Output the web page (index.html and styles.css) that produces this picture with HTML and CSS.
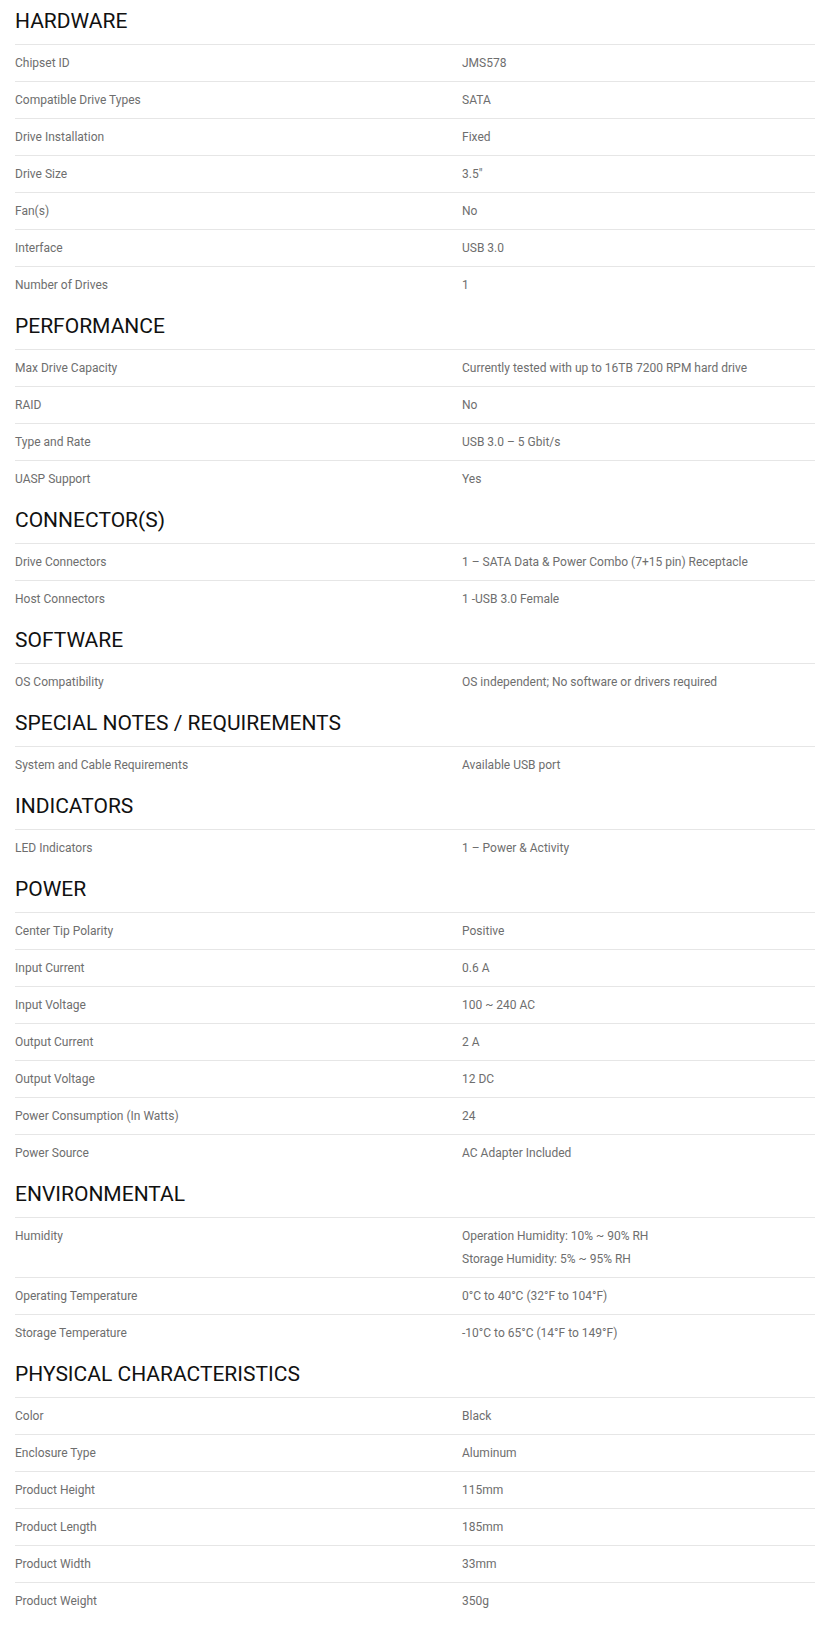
FILE: index.html
```html
<!DOCTYPE html>
<html>
<head>
  <title>Specifications</title>
  <link rel="stylesheet" href="styles.css">
</head>
<body>
  <div class="specs">
    <div class="section">
      <h3 class="section-title">HARDWARE</h3>
      <div class="row"><div class="label">Chipset ID</div><div class="value">JMS578</div></div>
      <div class="row"><div class="label">Compatible Drive Types</div><div class="value">SATA</div></div>
      <div class="row"><div class="label">Drive Installation</div><div class="value">Fixed</div></div>
      <div class="row"><div class="label">Drive Size</div><div class="value">3.5"</div></div>
      <div class="row"><div class="label">Fan(s)</div><div class="value">No</div></div>
      <div class="row"><div class="label">Interface</div><div class="value">USB 3.0</div></div>
      <div class="row"><div class="label">Number of Drives</div><div class="value">1</div></div>
    </div>

    <div class="section">
      <h3 class="section-title">PERFORMANCE</h3>
      <div class="row"><div class="label">Max Drive Capacity</div><div class="value">Currently tested with up to 16TB 7200 RPM hard drive</div></div>
      <div class="row"><div class="label">RAID</div><div class="value">No</div></div>
      <div class="row"><div class="label">Type and Rate</div><div class="value">USB 3.0 – 5 Gbit/s</div></div>
      <div class="row"><div class="label">UASP Support</div><div class="value">Yes</div></div>
    </div>

    <div class="section">
      <h3 class="section-title">CONNECTOR(S)</h3>
      <div class="row"><div class="label">Drive Connectors</div><div class="value">1 – SATA Data &amp; Power Combo (7+15 pin) Receptacle</div></div>
      <div class="row"><div class="label">Host Connectors</div><div class="value">1 -USB 3.0 Female</div></div>
    </div>

    <div class="section">
      <h3 class="section-title">SOFTWARE</h3>
      <div class="row"><div class="label">OS Compatibility</div><div class="value">OS independent; No software or drivers required</div></div>
    </div>

    <div class="section">
      <h3 class="section-title">SPECIAL NOTES / REQUIREMENTS</h3>
      <div class="row"><div class="label">System and Cable Requirements</div><div class="value">Available USB port</div></div>
    </div>

    <div class="section">
      <h3 class="section-title">INDICATORS</h3>
      <div class="row"><div class="label">LED Indicators</div><div class="value">1 – Power &amp; Activity</div></div>
    </div>

    <div class="section">
      <h3 class="section-title">POWER</h3>
      <div class="row"><div class="label">Center Tip Polarity</div><div class="value">Positive</div></div>
      <div class="row"><div class="label">Input Current</div><div class="value">0.6 A</div></div>
      <div class="row"><div class="label">Input Voltage</div><div class="value">100 ~ 240 AC</div></div>
      <div class="row"><div class="label">Output Current</div><div class="value">2 A</div></div>
      <div class="row"><div class="label">Output Voltage</div><div class="value">12 DC</div></div>
      <div class="row"><div class="label">Power Consumption (In Watts)</div><div class="value">24</div></div>
      <div class="row"><div class="label">Power Source</div><div class="value">AC Adapter Included</div></div>
    </div>

    <div class="section">
      <h3 class="section-title">ENVIRONMENTAL</h3>
      <div class="row">
        <div class="label">Humidity</div>
        <div class="value">Operation Humidity: 10% ~ 90% RH<br>Storage Humidity: 5% ~ 95% RH</div>
      </div>
      <div class="row"><div class="label">Operating Temperature</div><div class="value">0°C to 40°C (32°F to 104°F)</div></div>
      <div class="row"><div class="label">Storage Temperature</div><div class="value">-10°C to 65°C (14°F to 149°F)</div></div>
    </div>

    <div class="section">
      <h3 class="section-title">PHYSICAL CHARACTERISTICS</h3>
      <div class="row"><div class="label">Color</div><div class="value">Black</div></div>
      <div class="row"><div class="label">Enclosure Type</div><div class="value">Aluminum</div></div>
      <div class="row"><div class="label">Product Height</div><div class="value">115mm</div></div>
      <div class="row"><div class="label">Product Length</div><div class="value">185mm</div></div>
      <div class="row"><div class="label">Product Width</div><div class="value">33mm</div></div>
      <div class="row"><div class="label">Product Weight</div><div class="value">350g</div></div>
    </div>
  </div>
</body>
</html>
```

FILE: styles.css
```css
body {
  font-family: Roboto, "Liberation Sans", sans-serif;
  background-color: #fff;
  color: #111;
  margin: 0;
}

.specs {
  margin-left: 15px;
}

.section-title {
  margin: 0;
  padding: 11px 0 11px;
  font-size: 21px;
  font-weight: 400;
  line-height: 24px;
  color: #111;
  border-bottom: 1px solid #e6e6e6;
}

.section:first-child .section-title {
  padding-top: 9px;
}

.row {
  display: grid;
  grid-template-columns: 447px 1fr;
  border-bottom: 1px solid #e6e6e6;
}

.row:last-child {
  border-bottom: none;
}

.label,
.value {
  padding: 7px 0 6px;
  font-size: 12px;
  line-height: 23px;
  color: #6e6e6e;
}
```
